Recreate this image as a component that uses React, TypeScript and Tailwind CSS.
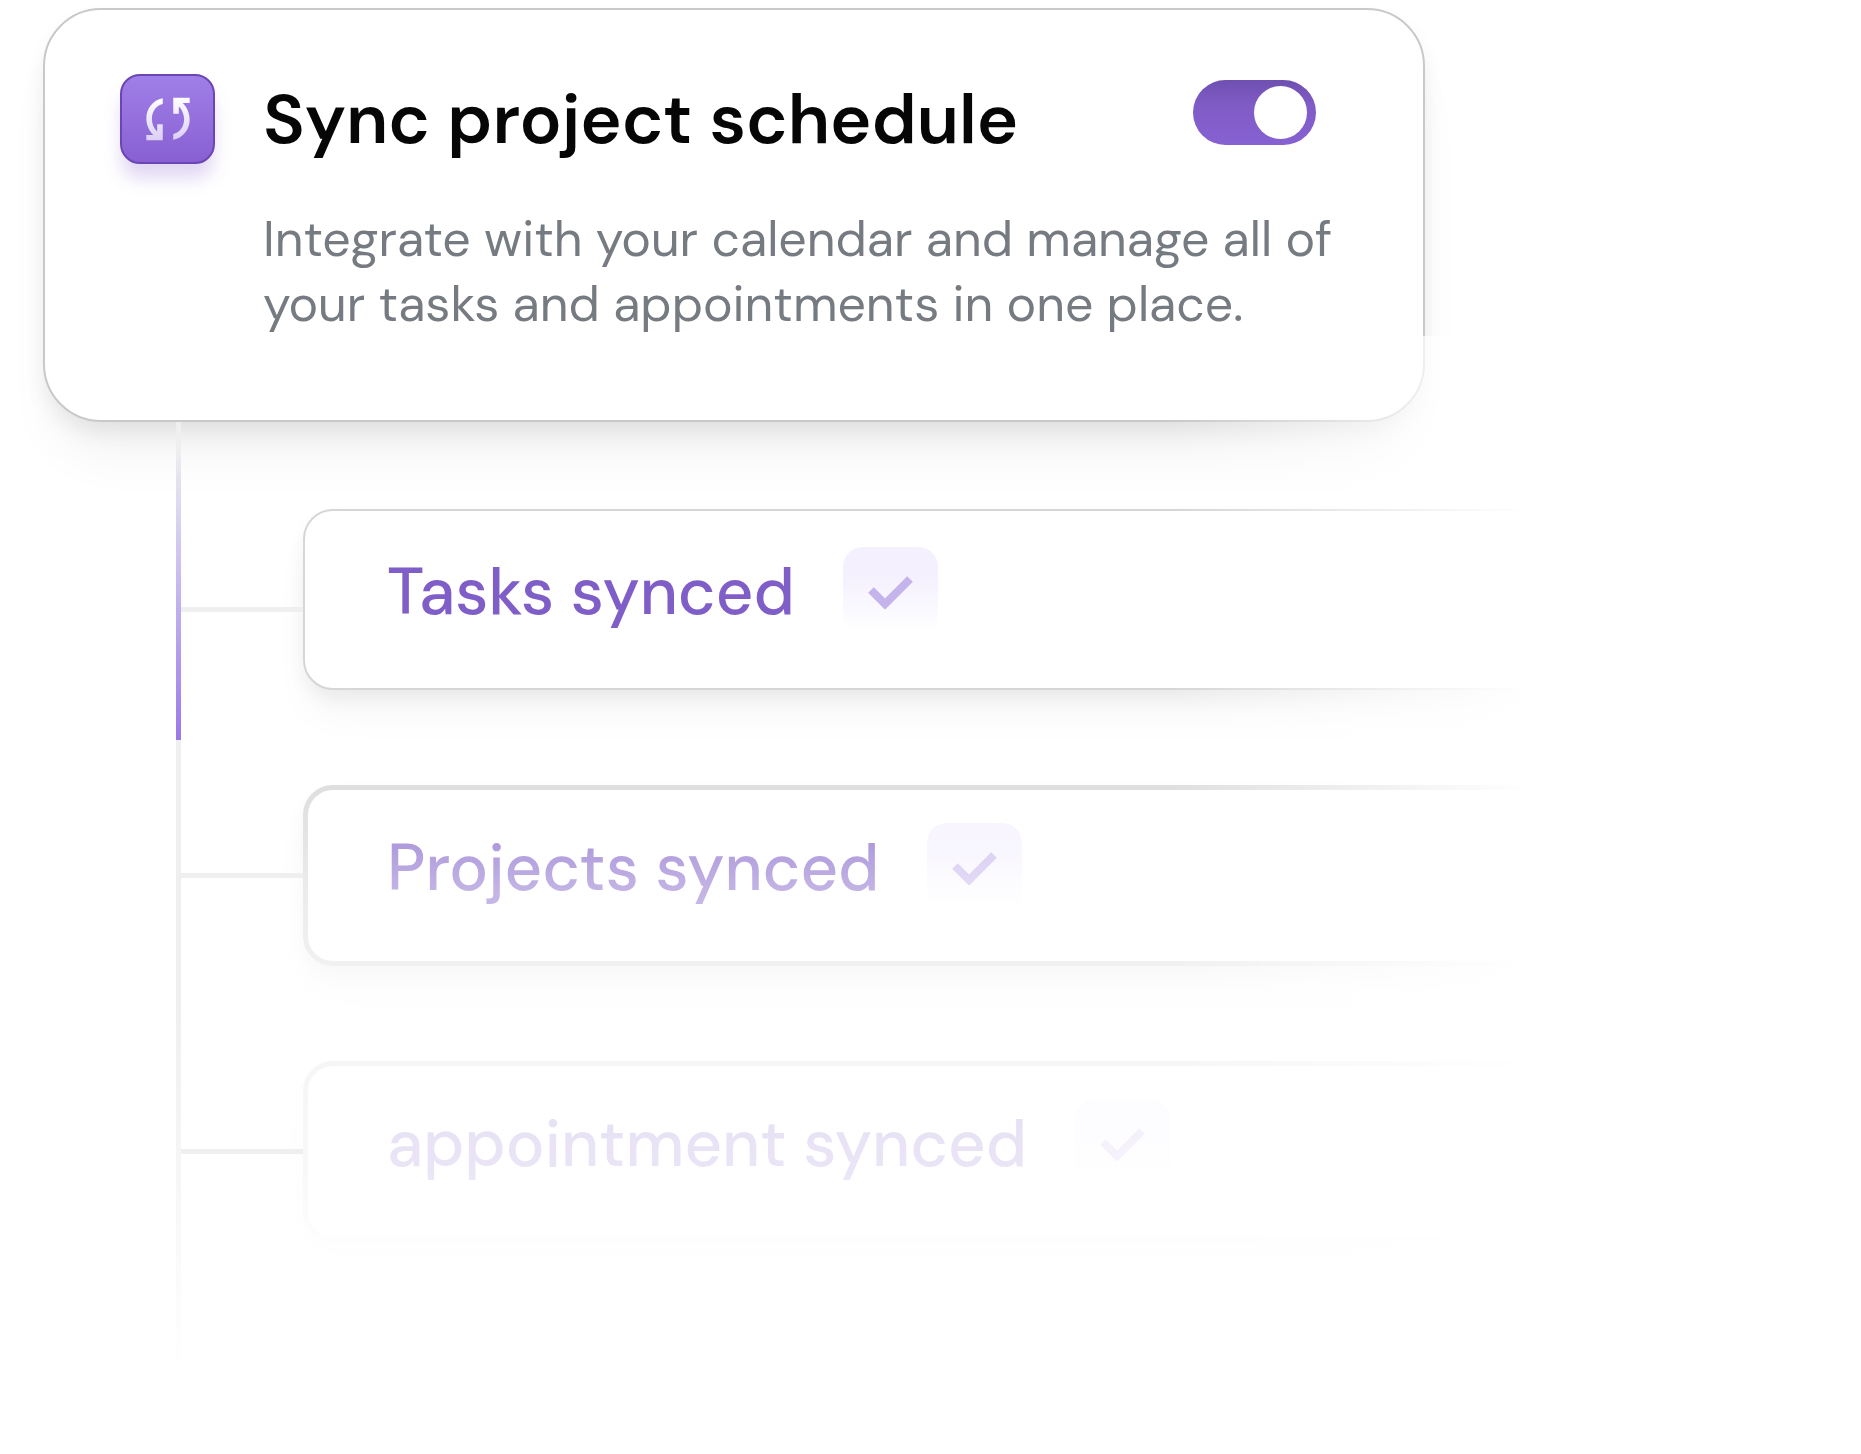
import { useState } from "react";
import clsx from "clsx";

interface SyncItem {
  label: string;
  /** first item has a thin outline, the queued ones a thicker one */
  active?: boolean;
}

const ITEMS: SyncItem[] = [
  { label: "Tasks synced", active: true },
  { label: "Projects synced" },
  { label: "appointment synced" },
];

const ARROW =
  "M51 3C20 9 1 35 1 64c0 20 8 38 21 51H1v16h50V82H34v22C24 95 18 80 18 65c0-23 14-41 33-45Z";

function SyncIcon() {
  return (
    <svg viewBox="0 0 134 132" className="w-11 h-11" aria-hidden="true">
      <defs>
        <linearGradient id="sync-left" x1="0" y1="0" x2="0" y2="1">
          <stop offset="0" stopColor="#ffffff" />
          <stop offset="1" stopColor="#dccff5" />
        </linearGradient>
        <linearGradient id="sync-right" x1="0" y1="1" x2="0" y2="0">
          <stop offset="0" stopColor="#ffffff" />
          <stop offset="1" stopColor="#dccff5" />
        </linearGradient>
      </defs>
      <path fill="url(#sync-left)" d={ARROW} />
      <path fill="url(#sync-right)" transform="rotate(180 67 66)" d={ARROW} />
    </svg>
  );
}

function CheckBadge() {
  return (
    <span className="flex h-[90px] w-[95px] shrink-0 items-center justify-center rounded-[20px] bg-linear-to-b from-[#f4f0fe] from-30% to-white to-95%">
      <svg viewBox="0 0 45 33" className="h-[33px] w-[45px]" fill="none" aria-hidden="true">
        <path d="M3 14 17 28 42 3" stroke="#c5b3ec" strokeWidth="8" />
      </svg>
    </span>
  );
}

function Switch({ label }: { label: string }) {
  const [on, setOn] = useState(true);
  return (
    <button
      type="button"
      role="switch"
      aria-checked={on}
      aria-label={label}
      onClick={() => setOn(!on)}
      className={clsx(
        "flex h-[65px] w-[123px] shrink-0 items-center rounded-full px-[9px]",
        on
          ? "justify-end bg-linear-to-b from-[#6f50b0] via-[#805cc7] via-40% to-[#8661d1]"
          : "justify-start bg-gray-300",
      )}
    >
      <span className="size-[53px] rounded-full bg-white" />
    </button>
  );
}

function SyncRow({ label, active = false }: SyncItem) {
  return (
    <li className="flex">
      {/* branch from the trunk to the card */}
      <span
        className={clsx(
          "relative z-10 h-[5px] w-[122px] shrink-0 bg-[#efefef]",
          active ? "mt-[98px]" : "mt-[88px]",
        )}
      />
      <div
        className={clsx(
          "flex h-[181px] flex-1 items-start gap-12 rounded-[30px] bg-white",
          "shadow-[0_10px_18px_rgba(0,0,0,0.05),0_28px_40px_-6px_rgba(0,0,0,0.04)]",
          active
            ? "border-2 border-[#d6d6d6] pt-9 pl-[82px]"
            : "border-[5px] border-[#d6d6d6] pt-[33px] pl-[79px]",
        )}
      >
        <span className="text-[65px] leading-[90px] font-medium whitespace-nowrap text-[#7f5fc7]">
          {label}
        </span>
        <CheckBadge />
      </div>
    </li>
  );
}

export default function App() {
  return (
    <main className="relative min-h-screen overflow-hidden bg-white pt-2 font-['DM_Sans',Inter,sans-serif]">
      <section className="ml-[43px] flex w-full max-w-[1382px] items-start gap-12 rounded-[58px] border-2 border-[#c9c9c9] bg-white pt-[64px] pr-[90px] pb-[83px] pl-[75px] shadow-[0_12px_22px_-2px_rgba(0,0,0,0.08),0_44px_56px_-16px_rgba(0,0,0,0.06)]">
        <span className="flex h-[90px] w-[95px] shrink-0 items-center justify-center rounded-[20px] border-2 border-[#6b45b5] bg-linear-to-b from-[#a07fe8] to-[#8860d2] shadow-[0_16px_18px_-2px_rgba(134,97,209,0.26)]">
          <SyncIcon />
        </span>
        <div className="flex-1">
          <div className="flex items-start justify-between pt-[6px] pr-[17px]">
            <h1 className="text-[70px] leading-[80px] font-semibold whitespace-nowrap text-[#060606]">
              Sync project schedule
            </h1>
            <Switch label="Sync project schedule" />
          </div>
          <p className="mt-[47px] text-[50px] leading-[65px] whitespace-nowrap text-[#767b82]">
            Integrate with your calendar and manage all of
            <br />
            your tasks and appointments in one place.
          </p>
        </div>
      </section>

      <div className="ml-[176px] flex max-w-[1370px]">
        {/* trunk */}
        <div className="flex w-[5px] shrink-0 flex-col">
          <span className="h-[318px] bg-linear-to-b from-[#efefef] from-8% to-[#9b78e8]" />
          <span className="h-[640px] bg-linear-to-b from-[#efefef] from-40% to-white" />
        </div>
        <div className="relative flex-1">
          <ul className="flex flex-col gap-[95px] pt-[87px] pb-28">
            {ITEMS.map((item) => (
              <SyncRow key={item.label} {...item} />
            ))}
          </ul>
          {/* fade towards the bottom */}
          <div className="pointer-events-none absolute inset-0 bg-[linear-gradient(to_bottom,rgba(255,255,255,0)_290px,rgba(255,255,255,0.37)_420px,rgba(255,255,255,0.53)_468px,rgba(255,255,255,0.65)_541px,rgba(255,255,255,0.78)_640px,rgba(255,255,255,0.84)_748px,rgba(255,255,255,0.95)_816px,#fff_928px)]" />
        </div>
      </div>

      {/* fade towards the right */}
      <div className="pointer-events-none absolute top-[336px] right-0 bottom-0 left-[1170px] bg-[linear-gradient(to_right,rgba(255,255,255,0),#fff_360px)]" />
    </main>
  );
}
